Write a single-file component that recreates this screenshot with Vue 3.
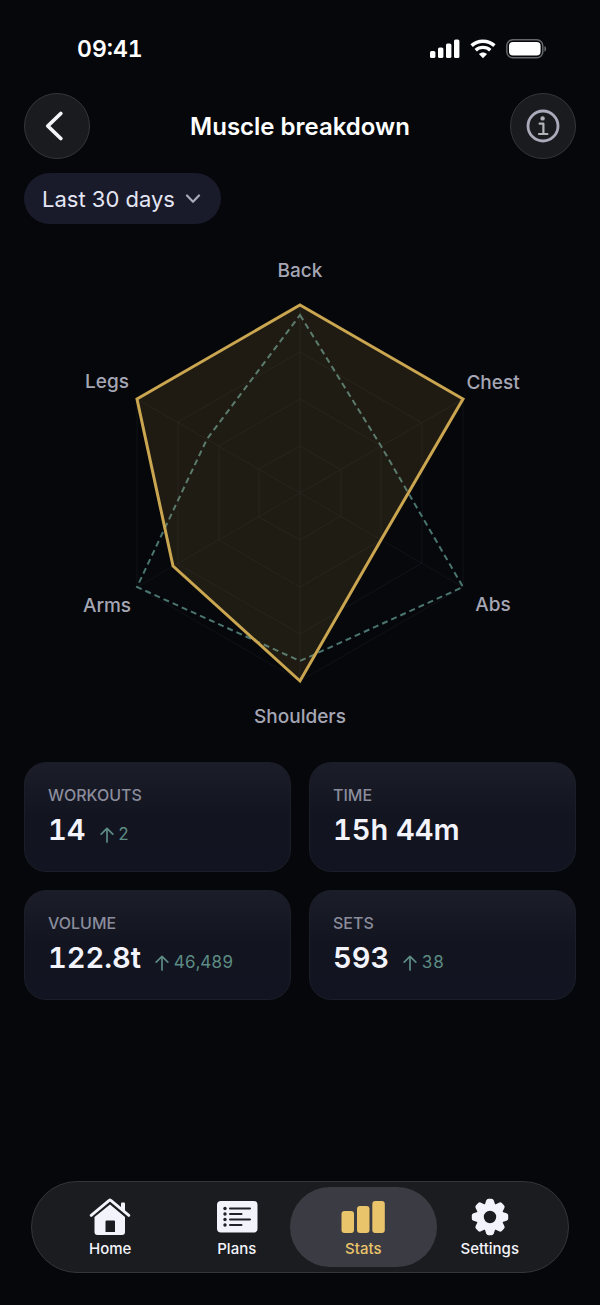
<script setup>
import { ref } from 'vue'

const period = ref('Last 30 days')
const activeTab = ref('Stats')
const tabs = ['Home', 'Plans', 'Stats', 'Settings']

const muscles = [
  { name: 'Back', current: 1, previous: 0.947 },
  { name: 'Chest', current: 1, previous: 0.5 },
  { name: 'Abs', current: 0.5, previous: 1 },
  { name: 'Shoulders', current: 1, previous: 0.895 },
  { name: 'Arms', current: 0.78, previous: 1 },
  { name: 'Legs', current: 1, previous: 0.57 },
]

const stats = [
  { label: 'Workouts', value: '14', delta: '2' },
  { label: 'Time', value: '15h 44m' },
  { label: 'Volume', value: '122.8t', delta: '46,489' },
  { label: 'Sets', value: '593', delta: '38' },
]

const radius = 188
const labelRadius = 223

function point(index, distance) {
  const angle = (index * Math.PI) / 3 - Math.PI / 2
  return [Math.round(Math.cos(angle) * distance), Math.round(Math.sin(angle) * distance)]
}

function polygon(valueOf) {
  return muscles.map((m, i) => point(i, radius * valueOf(m)).join(',')).join(' ')
}

const rings = [0.25, 0.5, 0.75, 1].map((level) => polygon(() => level))
const spokes = muscles.map((m, i) => point(i, radius))
const labels = muscles.map((m, i) => ({ name: m.name, at: point(i, labelRadius) }))
const currentShape = polygon((m) => m.current)
const previousShape = polygon((m) => m.previous)
</script>

<template>
  <div class="screen">
    <div class="status">
      <span class="clock">09:41</span>
      <div class="status-icons">
        <svg width="30" height="20" viewBox="0 0 30 20" fill="#fff" aria-hidden="true">
          <rect x="0" y="12" width="5.4" height="7" rx="1.6" />
          <rect x="8" y="8.500" width="5.400" height="10.500" rx="1.600" />
          <rect x="16" y="4.500" width="5.400" height="14.500" rx="1.600" />
          <rect x="24" y="0.500" width="5.400" height="18.500" rx="1.600" />
        </svg>
        <svg width="26" height="20" viewBox="0 0 26 20" fill="none" stroke="#fff" aria-hidden="true">
          <path d="M1.600 6.600C8 0.700 18 0.700 24.400 6.600" stroke-width="3.600" />
          <path d="M5.700 11.200C9.800 7.400 16.200 7.400 20.300 11.200" stroke-width="3.400" />
          <path d="M13 19.200L8.900 15C11.200 12.900 14.800 12.900 17.100 15Z" fill="#fff" stroke="none" />
        </svg>
        <svg width="42" height="20" viewBox="0 0 42 20" aria-hidden="true">
          <rect x="0.800" y="0.800" width="36" height="18" rx="6" fill="none" stroke="#65666b" stroke-width="1.500" />
          <rect x="3" y="3" width="31.600" height="13.600" rx="4" fill="#fff" />
          <path d="M38.400 7C40.800 7.700 40.800 12 38.400 12.700Z" fill="#65666b" />
        </svg>
      </div>
    </div>

    <header class="header">
      <button class="round" type="button" aria-label="Back">
        <svg width="32" height="32" viewBox="0 0 32 32" fill="none" stroke="#f4f4f8" stroke-width="3.800" stroke-linecap="round" stroke-linejoin="round">
          <path d="M19.800 3.500L6.800 16L19.800 28.500" />
        </svg>
      </button>
      <h1>Muscle breakdown</h1>
      <button class="round" type="button" aria-label="About this chart">
        <svg width="34" height="34" viewBox="0 0 34 34" fill="none" stroke="#a9abba">
          <circle cx="17" cy="17" r="15" stroke-width="2.800" />
          <circle cx="16.600" cy="9.400" r="2.200" fill="#b3b3b8" stroke="none" />
          <path d="M13.600 14.700H17.400V25M13 25H21.400" stroke="#b3b3b8" stroke-width="2.200" stroke-linecap="round" stroke-linejoin="round" />
        </svg>
      </button>
    </header>

    <div class="filter">
      <select v-model="period" aria-label="Period">
        <option>Last 30 days</option>
      </select>
      <svg class="chevron" width="16" height="10" viewBox="0 0 16 10" fill="none" stroke="#a9abba" stroke-width="2.200" stroke-linecap="round" stroke-linejoin="round" aria-hidden="true">
        <path d="M2 1.500L8 7.800L14 1.500" />
      </svg>
    </div>

    <svg class="radar" viewBox="-276 -253 552 506" role="img" aria-label="Muscle breakdown chart">
      <g class="grid">
        <polygon v-for="ring in rings" :key="ring" :points="ring" />
        <line v-for="(s, i) in spokes" :key="i" x1="0" y1="0" :x2="s[0]" :y2="s[1]" />
      </g>
      <polygon class="previous" :points="previousShape" />
      <polygon class="current" :points="currentShape" />
      <text v-for="l in labels" :key="l.name" :x="l.at[0]" :y="l.at[1]" dy="7" text-anchor="middle">{{ l.name }}</text>
    </svg>

    <section class="cards">
      <article v-for="s in stats" :key="s.label" class="card">
        <h2>{{ s.label }}</h2>
        <p>
          <span class="value">{{ s.value }}</span>
          <span v-if="s.delta" class="delta">
            <svg width="14" height="16" viewBox="0 0 14 16" fill="none" stroke="currentColor" stroke-width="1.700" stroke-linecap="round" stroke-linejoin="round" aria-hidden="true">
              <path d="M7 15V1.500M1.200 7.200L7 1.300L12.800 7.200" />
            </svg>
            {{ s.delta }}
          </span>
        </p>
      </article>
    </section>

    <nav class="tabs">
      <button v-for="tab in tabs" :key="tab" type="button" class="tab" :class="{ active: tab === activeTab }" @click="activeTab = tab">
        <svg v-if="tab === 'Home'" width="44" height="38" viewBox="0 0 44 38" fill="currentColor" aria-hidden="true">
          <path d="M33 5.500Q33 4.500 34 4.500H36Q37 4.500 37 5.500V13.500L33 9.800Z" />
          <path d="M3.200 17.400L21.200 2.400Q22 1.700 22.800 2.400L40.800 17.400" fill="none" stroke="currentColor" stroke-width="2.800" stroke-linecap="round" stroke-linejoin="round" />
          <path fill-rule="evenodd" d="M22 6.500L37 19V34Q37 37 34 37H9.500Q6.500 37 6.500 34V19ZM18.500 22.500Q17.500 22.500 17.500 23.500V34H27V23.500Q27 22.500 26 22.500Z" />
        </svg>
        <svg v-else-if="tab === 'Plans'" width="44" height="38" viewBox="0 0 44 38" aria-hidden="true">
          <rect x="2" y="3" width="40.500" height="31.500" rx="4" fill="currentColor" />
          <g stroke="#202126" stroke-width="2" stroke-linecap="round">
            <path d="M15 10.500H35M15 16H26.500M15 21.500H35M15 27H26.500" />
          </g>
          <g fill="#202126">
            <circle cx="10" cy="10.500" r="1.700" />
            <circle cx="10" cy="16" r="1.700" />
            <circle cx="10" cy="21.500" r="1.700" />
            <circle cx="10" cy="27" r="1.700" />
          </g>
        </svg>
        <svg v-else-if="tab === 'Stats'" width="44" height="38" viewBox="0 0 44 38" fill="currentColor" aria-hidden="true">
          <rect x="0.500" y="13" width="12.500" height="22" rx="3" />
          <rect x="16" y="8" width="12.500" height="27" rx="3" />
          <rect x="31.300" y="3" width="12.500" height="32" rx="3" />
        </svg>
        <svg v-else width="44" height="38" viewBox="-22 -19 44 38" fill="currentColor" aria-hidden="true">
          <path fill-rule="evenodd" d="M-13.500 0A13.500 13.500 0 1 1 13.500 0A13.500 13.500 0 1 1 -13.500 0ZM-6.200 0A6.200 6.200 0 1 0 6.200 0A6.200 6.200 0 1 0 -6.200 0Z" />
          <path v-for="n in 8" :key="n" :transform="`rotate(${n * 45})`" d="M-5.600 -11L-3.800 -16.500Q-3.200 -18.200 -1.500 -18.200H1.500Q3.200 -18.200 3.800 -16.500L5.600 -11Z" />
        </svg>
        <span>{{ tab }}</span>
      </button>
    </nav>
  </div>
</template>

<style>
body {
  background: #06070b;
}
</style>

<style scoped>
.screen {
  box-sizing: border-box;
  display: flex;
  flex-direction: column;
  min-height: 100vh;
  padding: 34px 24px 32px;
  background: #06070b;
  color: #f2f3fb;
  font-family: Inter, "Liberation Sans", sans-serif;
}
.status {
  display: flex;
  align-items: center;
  justify-content: space-between;
  height: 30px;
  padding: 0 28px 0 53px;
}
.clock {
  font-size: 23px;
  font-weight: 600;
  font-variant-numeric: tabular-nums;
  color: #fff;
}
.status-icons {
  display: flex;
  align-items: center;
  gap: 10px;
}
.header {
  display: flex;
  align-items: center;
  justify-content: space-between;
  margin-top: 29px;
}
h1 {
  margin: 0;
  font-size: 24px;
  font-weight: 600;
  color: #fff;
}
.round {
  display: grid;
  place-items: center;
  width: 66px;
  height: 66px;
  padding: 0;
  border: 1px solid #35363a;
  border-radius: 50%;
  background: #1a1b1f;
}
.filter {
  position: relative;
  align-self: flex-start;
  margin-top: 14px;
}
select {
  appearance: none;
  display: block;
  height: 51px;
  padding: 0 46px 0 18px;
  border: 0;
  border-radius: 26px;
  background: #191a2a;
  color: #e4e6f3;
  font: 400 22px Inter, "Liberation Sans", sans-serif;
}
.chevron {
  position: absolute;
  top: 21px;
  right: 20px;
  pointer-events: none;
}
.radar {
  display: block;
  width: 100%;
  margin-top: 16px;
}
.grid {
  fill: none;
  stroke: #101216;
  stroke-width: 1;
}
.previous {
  fill: rgba(70, 115, 110, 0.02);
  stroke: #4b7570;
  stroke-width: 2;
  stroke-dasharray: 6 4;
}
.current {
  fill: rgba(212, 170, 85, 0.12);
  stroke: #cba651;
  stroke-width: 3;
}
text {
  fill: #a5a6b4;
  font-size: 19px;
  font-weight: 500;
}
.cards {
  display: grid;
  grid-template-columns: 1fr 1fr;
  gap: 18px;
  margin-top: 16px;
}
.card {
  padding: 21px 23px 23px;
  border: 1px solid #1b1d28;
  border-radius: 22px;
  background: linear-gradient(#1b1d28, #121420 50%, #121421);
}
h2 {
  margin: 0;
  color: #8b8d9c;
  font-size: 16px;
  font-weight: 500;
  line-height: 22px;
  text-transform: uppercase;
}
p {
  display: flex;
  align-items: baseline;
  gap: 14px;
  margin: 6px 0 0;
  line-height: 36px;
  font-variant-numeric: tabular-nums;
}
.value {
  font-size: 29px;
  font-weight: 600;
}
.delta {
  color: #5c8c83;
  font-size: 17px;
  line-height: 20px;
}
.delta svg {
  vertical-align: -3px;
}
.tabs {
  display: grid;
  grid-template-columns: repeat(4, 1fr);
  margin: auto 7px 0;
  padding: 5px 15px;
  border: 1px solid #34353a;
  border-radius: 46px;
  background: #1b1c20;
}
.tab {
  position: relative;
  display: flex;
  flex-direction: column;
  align-items: center;
  gap: 3px;
  height: 80px;
  padding: 11px 0 0;
  border: 0;
  background: none;
  color: #f3f4fb;
  font: 500 15px/20px Inter, "Liberation Sans", sans-serif;
}
.tab.active {
  color: #e9c46a;
}
.tab.active::before {
  content: "";
  position: absolute;
  inset: 0 -10px;
  border-radius: 40px;
  background: #3b3b43;
}
.tab > * {
  position: relative;
}
</style>
